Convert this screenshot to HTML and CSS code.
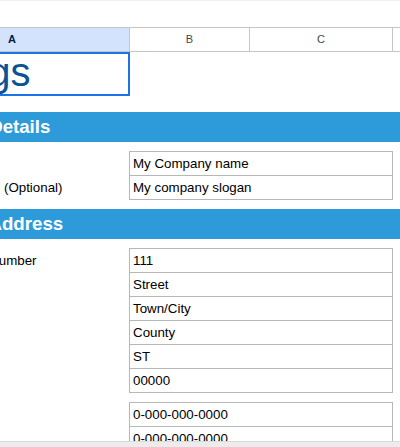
FILE: index.html
```html
<!DOCTYPE html>
<html>
<head>
<meta charset="utf-8">
<link rel="stylesheet" href="styles.css">
</head>
<body>
<div class="topbar"></div>
<div class="sheet">
  <div class="colheads">
    <div class="colhead selected">A</div>
    <div class="colhead">B</div>
    <div class="colhead">C</div>
    <div class="colhead">D</div>
  </div>
  <div class="title-row">
    <div class="title-cell">Settings</div>
  </div>
  <div class="band">Company Details</div>
  <div class="group">
    <div class="row"><div class="label">Company Name</div><div class="value">My Company name</div></div>
    <div class="row"><div class="label">Company Slogan (Optional)</div><div class="value">My company slogan</div></div>
  </div>
  <div class="band">Company Address</div>
  <div class="group">
    <div class="row"><div class="label">Street Address Number</div><div class="value">111</div></div>
    <div class="row"><div class="label">Street Name</div><div class="value">Street</div></div>
    <div class="row"><div class="label">Town/City</div><div class="value">Town/City</div></div>
    <div class="row"><div class="label">County</div><div class="value">County</div></div>
    <div class="row"><div class="label">State</div><div class="value">ST</div></div>
    <div class="row"><div class="label">Postcode</div><div class="value">00000</div></div>
  </div>
  <div class="group">
    <div class="row"><div class="label">Phone Number</div><div class="value">0-000-000-0000</div></div>
    <div class="row"><div class="label">Fax Number</div><div class="value">0-000-000-0000</div></div>
  </div>
</div>
<div class="hscroll"></div>
</body>
</html>
```
FILE: styles.css
```css
* { box-sizing: border-box; }
html, body {
  margin: 0;
  padding: 0;
  width: 400px;
  height: 447px;
  overflow: hidden;
  background: #ffffff;
  font-family: "Liberation Sans", Arial, sans-serif;
  font-size: 13.33px;
  color: #000000;
}
.topbar {
  height: 27px;
  border-top: 1px solid #f1f1f1;
}
.sheet {
  margin-left: -105px;
  width: 620px;
}
.colheads {
  display: grid;
  grid-template-columns: 235px 120px 143px 122px;
  height: 25px;
  border-top: 1px solid #c4c7c5;
  border-bottom: 1px solid #c4c7c5;
}
.colhead {
  border-right: 1px solid #c4c7c5;
  text-align: center;
  font-size: 11px;
  line-height: 23px;
  color: #444746;
}
.colhead.selected {
  background: #d3e3fd;
  color: #041e49;
  font-weight: bold;
}
.title-row {
  height: 44px;
}
.title-cell {
  width: 235px;
  height: 44px;
  border: 2px solid #1a73e8;
  padding: 0 0 2px 2px;
  display: flex;
  align-items: flex-end;
  font-size: 40px;
  line-height: 40px;
  color: #0b5394;
  white-space: nowrap;
  text-indent: -13px;
}
.band {
  margin-top: 16px;
  height: 30px;
  line-height: 30px;
  padding-left: 4px;
  background: #2d9bd9;
  color: #ffffff;
  font-weight: bold;
  font-size: 18.67px;
  white-space: nowrap;
}
.group + .band { margin-top: 9px; }
.group {
  margin-top: 9px;
  display: flex;
  flex-direction: column;
}
.row {
  display: flex;
  align-items: center;
  height: 25px;
}
.row + .row { margin-top: -1px; }
.label {
  width: 234px;
  padding-left: 3px;
  white-space: nowrap;
}
.value {
  width: 264px;
  height: 25px;
  border: 1px solid #b7b7b7;
  padding-left: 3px;
  line-height: 23px;
  white-space: nowrap;
}
.hscroll {
  position: fixed;
  left: 0;
  bottom: 0;
  width: 400px;
  height: 6px;
  background: #ececec;
  border-top: 1px solid #dadada;
}
```
